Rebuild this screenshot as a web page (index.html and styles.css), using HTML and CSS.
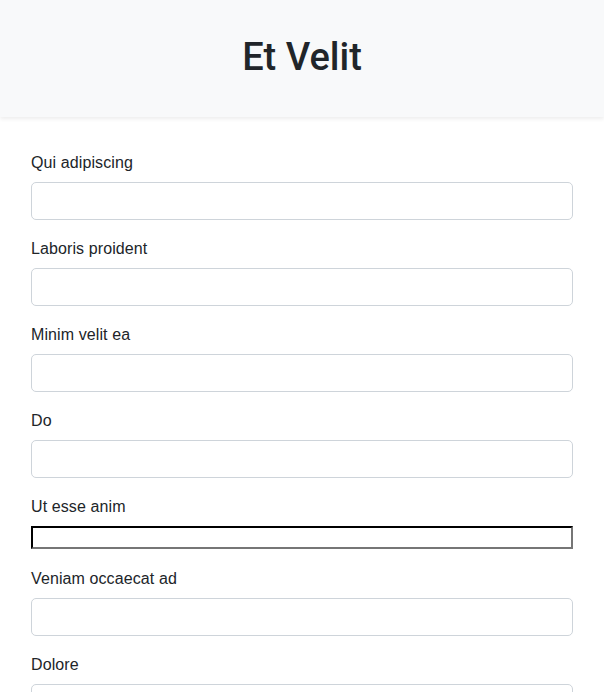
FILE: index.html
```html
<!DOCTYPE html>
<html lang="la">
<head>
<meta charset="utf-8">
<title>Et Velit</title>
<link rel="stylesheet" href="styles.css">
</head>
<body>
<header class="top">
  <h1 class="title">Et Velit</h1>
</header>
<main class="page">
  <form class="form">
    <div class="field">
      <label class="label" for="f1">Qui adipiscing</label>
      <input class="control" id="f1" type="text">
    </div>
    <div class="field">
      <label class="label" for="f2">Laboris proident</label>
      <input class="control" id="f2" type="text">
    </div>
    <div class="field">
      <label class="label" for="f3">Minim velit ea</label>
      <input class="control" id="f3" type="text">
    </div>
    <div class="field">
      <label class="label" for="f4">Do</label>
      <input class="control" id="f4" type="text">
    </div>
    <div class="field">
      <label class="label" for="f5">Ut esse anim</label>
      <input class="plain" id="f5" type="text">
    </div>
    <div class="field">
      <label class="label" for="f6">Veniam occaecat ad</label>
      <input class="control" id="f6" type="text">
    </div>
    <div class="field">
      <label class="label" for="f7">Dolore</label>
      <input class="control" id="f7" type="text">
    </div>
  </form>
</main>
</body>
</html>
```
FILE: styles.css
```css
html, body {
  margin: 0;
  padding: 0;
  background: #ffffff;
  font-family: "Liberation Sans", Arial, sans-serif;
  color: #212529;
}

.top {
  background: #f8f9fa;
  padding: 33px 0 36px;
  box-shadow: 0 2px 4px rgba(0, 0, 0, 0.075);
  text-align: center;
}

.title {
  margin: 0;
  font-family: Roboto, "Liberation Sans", Arial, sans-serif;
  font-size: 38px;
  line-height: 48px;
  font-weight: 500;
  color: #212529;
}

.page {
  padding: 33px 31px 0;
}

.form {
  display: flex;
  flex-direction: column;
  gap: 16px;
}

.field {
  display: flex;
  flex-direction: column;
}

.label {
  font-size: 16px;
  line-height: 24px;
  padding-top: 1px;
  margin-bottom: 7px;
  letter-spacing: 0.1px;
}

.control {
  box-sizing: border-box;
  width: 100%;
  height: 38px;
  border: 1px solid #ced4da;
  border-radius: 5px;
  background: #fff;
  padding: 6px 12px;
  font-size: 16px;
  font-family: inherit;
}

.plain {
  box-sizing: border-box;
  width: 100%;
  height: 23px;
  margin: 0 0 1px;
  border: 2px inset #767676;
  border-top-color: #1a1a1a;
  border-left-color: #1a1a1a;
  background: #fff;
  padding: 1px 2px;
  font-size: 13px;
}
```
